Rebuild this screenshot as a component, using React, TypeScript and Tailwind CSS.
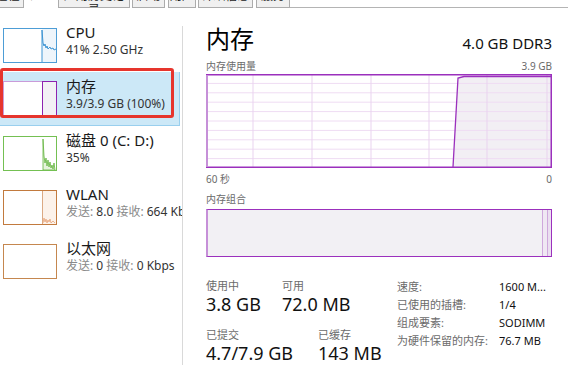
import type { ReactNode } from "react";

const font = "font-['Noto_Sans','Noto_Sans_CJK_SC',sans-serif]";

type Tab = { label: string; w: string; active?: boolean };

const tabs: Tab[] = [
  { label: "进程", w: "w-[33px] -ml-[9px]" },
  { label: "性能", w: "w-[34px]", active: true },
  { label: "应用历史记录", w: "w-[72px]" },
  { label: "启动", w: "w-[33px] ml-[2px]" },
  { label: "用户", w: "w-[28px] ml-[3px]" },
  { label: "详细信息", w: "w-[55px] ml-[2px]" },
  { label: "服务", w: "w-[34px] ml-[3px]" },
];

// 左侧缩略图
const CpuThumb = () => (
  <svg width="54" height="35" className="block">
    <rect x="0" y="0" width="54" height="35" fill="#fff" />
    <rect x="39" y="1" width="14" height="33" fill="#eef5fb" />
    <polyline
      points="39,34 39,2 40,15 41,18 42,16 43,20 44,18 45,21 47,19 48,21 50,20 51,22 53,21"
      fill="none"
      stroke="#3f95d3"
      strokeWidth="1"
    />
    <rect x="0.5" y="0.5" width="53" height="34" fill="none" stroke="#4d9dd6" />
  </svg>
);

const MemThumb = () => (
  <svg width="54" height="35" className="block">
    <rect x="0" y="0" width="54" height="35" fill="#fff" />
    <rect x="39" y="1" width="14" height="33" fill="#f3f0f5" />
    <rect x="0.5" y="0.5" width="53" height="34" fill="none" stroke="#c99bd9" />
    <rect x="39.5" y="0.5" width="14" height="34" fill="none" stroke="#8e22b0" />
  </svg>
);

const DiskThumb = () => (
  <svg width="54" height="35" className="block">
    <rect x="0" y="0" width="54" height="35" fill="#fff" />
    <polygon
      points="40,34 40,3 41,20 42,27 43,22 44,30 45,24 46,31 47,26 48,32 49,29 50,33 51,27 52,34"
      fill="#e6f3dc"
      stroke="#5fb33a"
      strokeWidth="0.8"
    />
    <rect x="0.5" y="0.5" width="53" height="34" fill="none" stroke="#74c052" />
  </svg>
);

const WlanThumb = () => (
  <svg width="54" height="35" className="block">
    <rect x="0" y="0" width="54" height="35" fill="#fff" />
    <rect x="39" y="1" width="14" height="33" fill="#fcf2ea" />
    <line x1="39.5" y1="1" x2="39.5" y2="34" stroke="#dba983" />
    <polyline
      points="40,33 41,28 42,32 43,29 44,33 45,30 46,32 47,29 48,33 50,31 52,33"
      fill="none"
      stroke="#e7a57a"
      strokeWidth="0.8"
    />
    <rect x="0.5" y="0.5" width="53" height="34" fill="none" stroke="#c27a3e" />
  </svg>
);

const EthThumb = () => (
  <svg width="54" height="35" className="block">
    <rect x="0" y="0" width="54" height="35" fill="#fff" />
    <rect x="0.5" y="0.5" width="53" height="34" fill="none" stroke="#c5874f" />
  </svg>
);

type ItemProps = {
  thumb: ReactNode;
  title: string;
  sub: ReactNode;
  selected?: boolean;
};

const SideItem = ({ thumb, title, sub, selected }: ItemProps) => (
  <div
    className={`relative flex h-[54px] ${
      selected
        ? "w-[180px] bg-[#cce8f7] border-r border-b border-[#99cfee]"
        : "w-[182px]"
    }`}
  >
    <div className="ml-[3px] self-center">{thumb}</div>
    <div className="ml-[9px] mt-[5px] whitespace-nowrap">
      <div className="text-[15px] leading-[18px] text-[#1a1a1a]">{title}</div>
      <div className="mt-px text-[12px] leading-[16px] text-[#333]">{sub}</div>
    </div>
    {selected && (
      <div className="absolute left-0 -top-[4px] h-[50px] w-[174px] rounded-[3px] border-[3px] border-[#e6352d]" />
    )}
  </div>
);

const UsageChart = () => {
  const rows = [9.4, 18.8, 28.2, 37.6, 47, 56.4, 65.8, 75.2, 84.6];
  const cols = [47, 106, 165, 223, 281, 341];
  return (
    <svg width="346" height="94" className="block">
      <rect x="0" y="0" width="346" height="94" fill="#fff" />
      <polygon points="247,93 252,4 258,2.5 345,2.5 345,93" fill="#f2eff4" />
      {rows.map((y) => (
        <line key={y} x1="1" x2="345" y1={y} y2={y} stroke="#efdcf3" strokeWidth="1" />
      ))}
      {cols.map((x) => (
        <line key={x} x1={x} x2={x} y1="1" y2="93" stroke="#e9d3ef" strokeWidth="1" />
      ))}
      <polyline
        points="247,93 252,4 258,2.5 345,2.5"
        fill="none"
        stroke="#9b30bd"
        strokeWidth="1.3"
      />
      <rect x="0.75" y="0.75" width="344.5" height="92.5" fill="none" stroke="#9b30bd" strokeWidth="1.5" />
      <line x1="1" y1="1" x2="1" y2="93" stroke="#c690d8" strokeWidth="2" />
    </svg>
  );
};

const Label = ({ children }: { children: ReactNode }) => (
  <div className="h-[15px] text-[11px] leading-[15px] text-[#6b6b6b]">{children}</div>
);

const Value = ({ children }: { children: ReactNode }) => (
  <div className="h-[22px] text-[18px] leading-[22px] text-[#111]">{children}</div>
);

const details = [
  ["速度:", "1600 M..."],
  ["已使用的插槽:", "1/4"],
  ["组成要素:", "SODIMM"],
  ["为硬件保留的内存:", "76.7 MB"],
];

export default function App() {
  return (
    <div className={`w-[568px] h-[365px] overflow-hidden bg-white ${font}`}>
      {/* 顶部选项卡（被截掉） */}
      <div className="flex h-[8px] items-end overflow-hidden">
        {tabs.map((t) => (
          <div
            key={t.label}
            className={`${t.w} h-[20px] shrink-0 overflow-hidden text-center text-[12px] leading-[14px] text-[#222] ${
              t.active ? "bg-white" : "bg-[#f0f0f0] border border-[#acacac]"
            }`}
          >
            <div>{t.label}</div>
          </div>
        ))}
        <div className="h-[1px] flex-1 self-end bg-[#b4b4b4]" />
      </div>

      <div className="flex">
        {/* 左侧列表 */}
        <div className="flex w-[183px] shrink-0">
          <div className="w-[182px] overflow-hidden pt-[10px]">
            <SideItem thumb={<CpuThumb />} title="CPU" sub="41% 2.50 GHz" />
            <SideItem
              thumb={<MemThumb />}
              title="内存"
              sub="3.9/3.9 GB (100%)"
              selected
            />
            <SideItem thumb={<DiskThumb />} title="磁盘 0 (C: D:)" sub="35%" />
            <SideItem
              thumb={<WlanThumb />}
              title="WLAN"
              sub={
                <>
                  <span className="text-[#8a8a8a]">发送:</span> 8.0{" "}
                  <span className="text-[#8a8a8a]">接收:</span> 664 Kbps
                </>
              }
            />
            <SideItem
              thumb={<EthThumb />}
              title="以太网"
              sub={
                <>
                  <span className="text-[#8a8a8a]">发送:</span> 0{" "}
                  <span className="text-[#8a8a8a]">接收:</span> 0 Kbps
                </>
              }
            />
          </div>
          <div className="mt-[18px] h-[340px] w-px bg-[#d9d9d9]" />
        </div>

        {/* 右侧详情 */}
        <div className="flex-1 pl-[23px] pr-[16px] pt-[15px]">
          <div className="flex h-[36px] items-start justify-between">
            <div className="text-[24px] leading-[32px] text-black">内存</div>
            <div className="mt-[10px] text-[15px] leading-[20px] text-[#111]">4.0 GB DDR3</div>
          </div>
          <div className="flex justify-between text-[10px] leading-[14px] text-[#6b6b6b]">
            <span>内存使用量</span>
            <span>3.9 GB</span>
          </div>
          <div className="mt-px">
            <UsageChart />
          </div>
          <div className="mt-[4px] flex justify-between text-[10px] leading-[14px] text-[#6b6b6b]">
            <span>60 秒</span>
            <span>0</span>
          </div>
          <div className="mt-[6px] text-[10px] leading-[14px] text-[#6b6b6b]">内存组合</div>
          <div className="mt-[3px] flex h-[48px] justify-end border-[1.5px] border-[#9b30bd] border-l-[2px] border-l-[#c690d8] bg-[#f2f0f4]">
            <div className="w-[5px] border-l border-[#cfa8dc] bg-[#f0e8f3]" />
            <div className="w-[4px] border-l border-[#cfa8dc] bg-[#ebdff0]" />
          </div>

          <div className="mt-[21px] flex items-start">
            <div className="w-[191px] shrink-0">
              <div className="flex">
                <div className="w-[76px]">
                  <Label>使用中</Label>
                  <Value>3.8 GB</Value>
                </div>
                <div>
                  <Label>可用</Label>
                  <Value>72.0 MB</Value>
                </div>
              </div>
              <div className="mt-[12px] flex">
                <div className="w-[112px]">
                  <Label>已提交</Label>
                  <Value>4.7/7.9 GB</Value>
                </div>
                <div>
                  <Label>已缓存</Label>
                  <Value>143 MB</Value>
                </div>
              </div>
            </div>
            <div className="flex flex-col text-[11px] leading-[18px]">
              {details.map(([k, v]) => (
                <div key={k} className="flex h-[18px]">
                  <span className="w-[102px] whitespace-nowrap text-[#6b6b6b]">{k}</span>
                  <span className="whitespace-nowrap text-[#111]">{v}</span>
                </div>
              ))}
            </div>
          </div>
        </div>
      </div>
    </div>
  );
}
